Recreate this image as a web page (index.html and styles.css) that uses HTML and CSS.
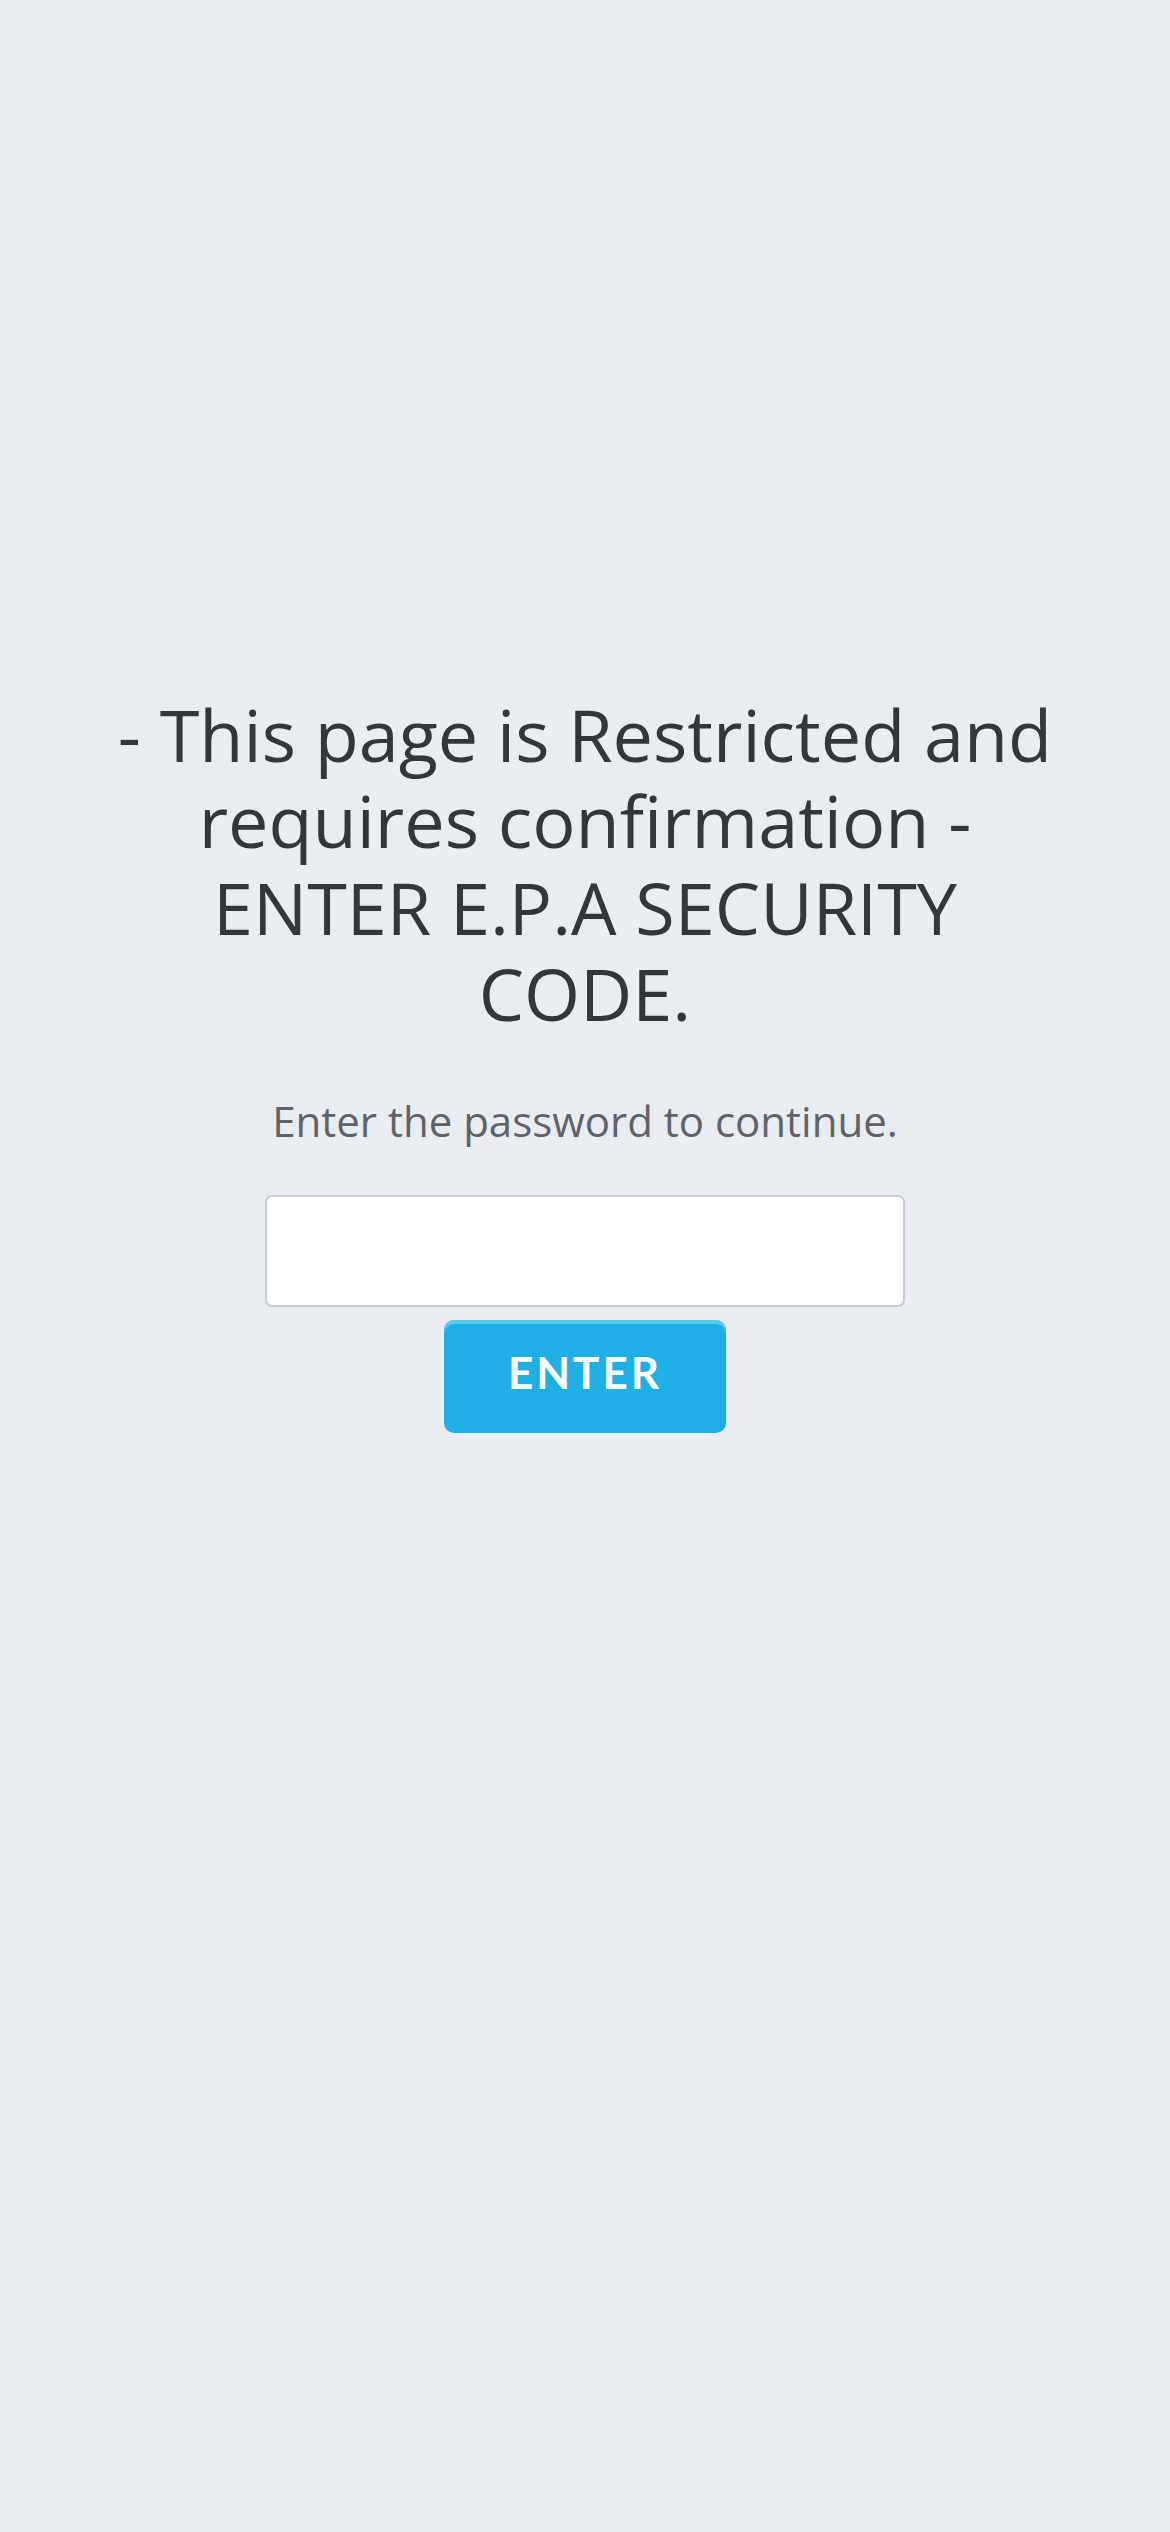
FILE: index.html
```html
<!DOCTYPE html>
<html lang="en">
<head>
    <meta charset="UTF-8">
    <meta name="viewport" content="width=device-width, initial-scale=1.0">
    <title>Restricted</title>
    <link rel="stylesheet" href="styles.css">
</head>
<body>
    <div class="container">
        <h1>- This page is Restricted and requires confirmation - ENTER E.P.A SECURITY CODE.</h1>
        <p class="hint">Enter the password to continue.</p>
        <form class="gate" onsubmit="return false;">
            <input type="password" name="password" aria-label="Password">
            <button type="submit">ENTER</button>
        </form>
    </div>
</body>
</html>
```

FILE: styles.css
```css
body {
    font-family: 'Open Sans', 'Noto Sans', sans-serif;
    background-color: #e9ecf1;
    margin: 0;
    color: #33373b;
}
.container {
    padding: 691px 100px 0;
    text-align: center;
}
h1 {
    margin: 0;
    font-size: 72px;
    font-weight: 400;
    line-height: 86.4px;
    color: #33373b;
}
.hint {
    margin: 54px 0 0;
    font-size: 42px;
    line-height: 60px;
    color: #5f6368;
}
.gate {
    display: flex;
    flex-direction: column;
    align-items: center;
    gap: 13px;
    margin-top: 44px;
}
input[type="password"] {
    width: 640px;
    height: 112px;
    box-sizing: border-box;
    border: 2px solid #c9cbcd;
    border-radius: 7px;
    background: #fff;
    font-size: 36px;
    padding: 0 20px;
    outline: none;
}
button {
    width: 282px;
    height: 113px;
    border: none;
    border-radius: 10px;
    background-color: #1eb0e4;
    box-shadow: inset 0 4px 0 #5ccbf0;
    color: #fff;
    font-family: 'Lato', 'Open Sans', sans-serif;
    font-weight: 700;
    font-size: 44px;
    letter-spacing: 3px;
    padding: 0 0 8px;
    cursor: pointer;
}
```
